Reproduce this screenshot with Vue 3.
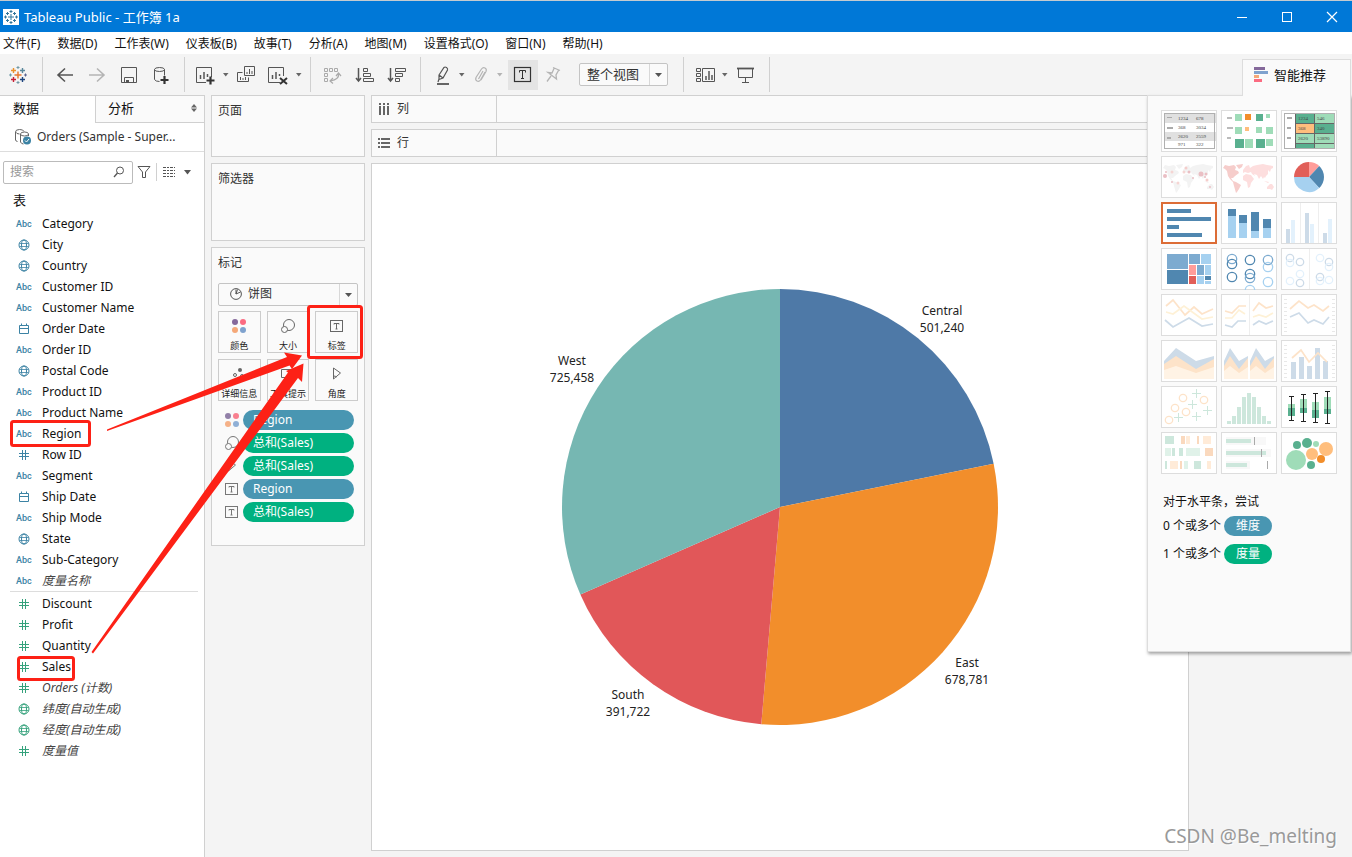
<script setup>
import { ref } from 'vue'

const menus = ['文件(F)', '数据(D)', '工作表(W)', '仪表板(B)', '故事(T)', '分析(A)', '地图(M)', '设置格式(O)', '窗口(N)', '帮助(H)']

const dimensions = [
  { type: 'abc', name: 'Category' },
  { type: 'geo', name: 'City' },
  { type: 'geo', name: 'Country' },
  { type: 'abc', name: 'Customer ID' },
  { type: 'abc', name: 'Customer Name' },
  { type: 'date', name: 'Order Date' },
  { type: 'abc', name: 'Order ID' },
  { type: 'geo', name: 'Postal Code' },
  { type: 'abc', name: 'Product ID' },
  { type: 'abc', name: 'Product Name' },
  { type: 'abc', name: 'Region' },
  { type: 'num', name: 'Row ID' },
  { type: 'abc', name: 'Segment' },
  { type: 'date', name: 'Ship Date' },
  { type: 'abc', name: 'Ship Mode' },
  { type: 'geo', name: 'State' },
  { type: 'abc', name: 'Sub-Category' },
  { type: 'abc', name: '度量名称', auto: true },
]
const measures = [
  { type: 'num', name: 'Discount' },
  { type: 'num', name: 'Profit' },
  { type: 'num', name: 'Quantity' },
  { type: 'num', name: 'Sales' },
  { type: 'num', name: 'Orders (计数)', auto: true },
  { type: 'geo', name: '纬度(自动生成)', auto: true },
  { type: 'geo', name: '经度(自动生成)', auto: true },
  { type: 'num', name: '度量值', auto: true },
]
const fieldGroups = [
  { key: 'dimension', fields: dimensions },
  { key: 'measure', fields: measures },
]

const markButtons = [
  { icon: 'color', label: '颜色' },
  { icon: 'size', label: '大小' },
  { icon: 'label', label: '标签' },
  { icon: 'detail', label: '详细信息' },
  { icon: 'tooltip', label: '工具提示' },
  { icon: 'angle', label: '角度' },
]
const pills = [
  { icon: 'color', label: 'Region', kind: 'blue' },
  { icon: 'size', label: '总和(Sales)', kind: 'green' },
  { icon: 'angle', label: '总和(Sales)', kind: 'green' },
  { icon: 'label', label: 'Region', kind: 'blue' },
  { icon: 'label', label: '总和(Sales)', kind: 'green' },
]

const slice = (cx, cy, r, from, to) => {
  const p = (t) => `${(cx + r * Math.sin(t * 2 * Math.PI)).toFixed(2)} ${(cy - r * Math.cos(t * 2 * Math.PI)).toFixed(2)}`
  return `M${cx} ${cy}L${p(from)}A${r} ${r} 0 ${to - from > 0.5 ? 1 : 0} 1 ${p(to)}Z`
}

const regions = [
  { name: 'Central', value: 501240, color: '#4e79a7', x: 162, y: -192 },
  { name: 'East', value: 678781, color: '#f28e2b', x: 187, y: 160 },
  { name: 'South', value: 391722, color: '#e15759', x: -152, y: 192 },
  { name: 'West', value: 725458, color: '#76b7b2', x: -208, y: -142 },
]
const total = regions.reduce((s, r) => s + r.value, 0)
let acc = 0
const slices = regions.map((r) => {
  const from = acc / total
  acc += r.value
  return { ...r, d: slice(0, 0, 218, from, acc / total), text: r.value.toLocaleString('en-US') }
})

const miniPie = [
  { d: slice(28, 21, 15, 0, 0.12), c: '#ff9d9a' },
  { d: slice(28, 21, 15, 0.12, 0.38), c: '#5087b0' },
  { d: slice(28, 21, 15, 0.38, 0.75), c: '#a6d1f0' },
  { d: slice(28, 21, 15, 0.75, 1), c: '#e15f59' },
]

const G = '#59b08f', L = '#9fdcb8', O = '#ffbe7d', D = '#5087b0', M = '#7dabd0', B = '#a6d1f0'
const PB = '#cddbe8', LB = '#e3f1fc', PO = '#fde3c9', PY = '#fef1d6', PG = '#cde7dc'

const worldAmericas = 'M2 12L4 9L8 10L13 9L15 11L14 14L17 15L18 17L14 20L12 22L10 22L12 25L15 26L20 29L18 33L16 36L15 37L13 30L12 26L9 23L7 20L6 15L4 13ZM15 9L22 8L21 11L18 13Z'
const worldOthers = 'M22 14L25 10L28 9L29 12L32 10L36 9L42 8L46 9L52 10L52 12L50 13L49 16L47 14L47 18L45 20L44 22L43 21L42 23L40 20L38 23L36 19L33 18L34 20L31 18L30 16L27 17L24 16L22 17ZM22 20L25 18L30 19L33 23L30 27L29 31L27 32L26 26L22 24ZM46 31L49 28L51 28L53 31L51 34L49 33L46 33ZM43 25L48 26L47 27Z'

const thumbs = [
  { name: '文本表', rects: [[3, 3, 52, 10, '#e0e0e0'], [3, 22, 52, 9, '#e0e0e0'], [6, 7, 5, 1, '#aaa'], [6, 17, 6, 2, '#aaa'], [6, 27, 4, 2, '#aaa']], frame: true, texts: [[17, 10, '1234'], [35, 10, '678'], [17, 19, '368'], [35, 19, '3034'], [17, 28, '2620'], [35, 28, '2559'], [17, 36, '971'], [35, 36, '322']] },
  { name: '热图', rects: [[6, 7, 5, 2, '#bbb'], [6, 17, 6, 2, '#bbb'], [6, 27, 4, 2, '#bbb'], [14, 4, 7, 7, L], [24, 4, 6, 6, '#f28e2b'], [35, 4, 7, 7, G], [45, 4, 4, 4, L], [14, 17, 7, 7, L], [24, 17, 4, 4, O], [35, 17, 6, 6, L], [45, 17, 7, 7, L], [14, 29, 9, 9, G], [24, 29, 8, 9, L], [35, 29, 9, 9, G], [45, 29, 7, 7, L]] },
  { name: '突出显示表', frame: true, rects: [[6, 7, 5, 2, '#aaa'], [6, 17, 4, 2, '#aaa'], [6, 27, 4, 2, '#aaa'], [14, 4, 39, 34, '#666'], [15, 4, 18, 9, G], [34, 4, 19, 9, L], [15, 14, 18, 9, O], [34, 14, 19, 9, G], [15, 24, 18, 9, L], [34, 24, 19, 9, L], [15, 34, 18, 4, G], [34, 34, 19, 4, L]], texts: [[17, 10, '1234'], [36, 10, '546'], [17, 20, '368'], [36, 20, '340'], [17, 30, '2620'], [36, 30, '53890']] },
  { name: '符号地图', areas: [[worldAmericas, '#f3f3f3'], [worldOthers, '#f3f3f3']], dots: [[4, 20, 2, '#eabfc4'], [5, 16, 1, '#eabfc4'], [11, 16, 1.5, '#f5d5d3'], [17, 27, 1.5, '#f5d5d3'], [11, 26, 1, '#eabfc4'], [25, 12, 1.5, '#f5cdcb'], [23, 16, 1.5, '#f5d5d3'], [28, 16, 1.5, '#eabfc4'], [32, 22, 1, '#eabfc4'], [40, 18, 2.5, '#eabfc4'], [45, 18, 1.5, '#eabfc4'], [44, 21, 1, '#eabfc4'], [46, 24, 1.5, '#f5cdcb'], [49, 31, 1, '#eabfc4']] },
  { name: '地图', areas: [[worldAmericas, '#f6cdcb'], [worldOthers, '#fddede']] },
  { name: '饼图', areas: miniPie.map((p) => [p.d, p.c]) },
  { name: '水平条', selected: true, rects: [[6, 7, 24, 4, D], [6, 15, 44, 4, D], [6, 23, 12, 4, D], [6, 31, 35, 4, D]] },
  { name: '堆叠条', rects: [[7, 7, 8, 7, D], [7, 14, 8, 22, B], [18, 13, 8, 8, D], [18, 21, 8, 15, B], [30, 10, 8, 19, D], [30, 29, 8, 7, B], [42, 17, 8, 9, D], [42, 26, 8, 10, B]] },
  { name: '并排条', rects: [[19, 1, 1, 40, '#eee'], [37, 1, 1, 40, '#eee'], [5, 27, 4, 14, PB], [10, 18, 4, 23, LB], [24, 11, 4, 30, PB], [29, 22, 4, 19, LB], [42, 31, 4, 10, PB], [47, 17, 4, 24, LB]] },
  { name: '树状图', rects: [[6, 6, 21, 15, M], [6, 22, 21, 14, D], [28, 6, 11, 10, M], [40, 6, 10, 10, B], [28, 17, 7, 10, '#ff9d9a'], [28, 28, 7, 8, '#e15f59'], [36, 17, 7, 10, M], [44, 17, 6, 10, B], [36, 28, 7, 8, B], [44, 28, 6, 4, D], [44, 33, 6, 3, B]] },
  { name: '圆视图', rings: [[11, 11, 4.7, M], [11, 16, 4.7, D], [11, 29, 4.7, D], [29, 12, 4.7, D], [29, 26, 4.7, D], [29, 30, 4.7, M], [29, 42, 4.7, B], [47, 19, 4.7, B], [47, 12, 4.7, M], [47, 34, 4.7, B]] },
  { name: '并排圆', rects: [[28, 1, 1, 40, '#eee']], rings: [[9, 10, 3.7, PB], [9, 15, 3.7, LB], [19, 14, 3.7, PB], [19, 26, 3.7, LB], [9, 33, 3.7, LB], [19, 35, 3.7, PB], [39, 10, 3.7, LB], [48, 14, 3.7, PB], [48, 19, 3.7, LB], [39, 29, 3.7, PB], [39, 33, 3.7, LB], [48, 32, 3.7, LB]] },
  { name: '线(连续)', lines: [['5,12 12,6 24,21 33,13 41,20 52,15', PO], ['5,18 12,20 23,12 41,25 52,23', PY], ['4,26 12,33 28,24 41,32 52,30', PB]] },
  { name: '线(离散)', rects: [[28, 1, 1, 40, '#eee']], lines: [['4,17 11,19 18,12 25,12', PO], ['4,24 11,24 18,16 24,20', PY], ['4,31 11,33 17,27 25,27', PB], ['32,17 38,9 45,14 52,12', PO], ['32,23 38,21 45,23 52,19', PY], ['32,31 38,27 45,30 52,27', PB]] },
  { name: '双线', ticks: true, lines: [['9,15 18,7 27,14 33,11 42,17 48,12', PO], ['9,23 18,19 27,29 33,26 42,30 48,23', PB]] },
  { name: '区域(连续)', areas: [['M3 21L15 8L35 21L53 16V39H3Z', PB], ['M3 24L15 16L35 29L53 19V39H3Z', PO], ['M3 30L15 26L35 33L53 27V39H3Z', '#fff3e5']] },
  { name: '区域(离散)', areas: [['M3 21L9 8L18 21L27 16V39H3ZM29 21L35 8L44 21L53 16V39H29Z', PB], ['M3 26L9 16L18 29L27 18V39H3ZM29 26L35 16L44 29L53 18V39H29Z', PO], ['M3 31L9 26L18 33L27 27V39H3ZM29 31L35 26L44 33L53 27V39H29Z', '#fff3e5']] },
  { name: '双组合', ticks: true, rects: [[10, 22, 5, 17, PB], [18, 17, 5, 22, PB], [26, 26, 5, 13, PB], [34, 8, 5, 31, PB], [42, 21, 5, 18, PB]], lines: [['11,18 20,10 28,22 37,13 46,22', PO]] },
  { name: '散点图', rings: [[22, 12, 3.7, PO], [43, 14, 3.7, PO], [14, 22, 3.7, PO], [25, 26, 3.7, PO], [8, 34, 3.7, PO]], pluses: [[35, 7], [31, 18], [46, 24], [17, 31], [35, 30]] },
  { name: '直方图', rects: [35, 30, 21, 11, 7, 11, 21, 30, 35].map((y, i) => [6 + i * 5, y, 4, 38 - y, PG]) },
  { name: '盒须图', rects: [[7, 18, 7, 4, L], [7, 22, 7, 8, G], [19, 13, 7, 9, L], [19, 22, 7, 5, G], [31, 16, 7, 8, L], [31, 24, 7, 8, G], [43, 11, 7, 12, L], [43, 23, 7, 5, G], ...[[8, 10, 34], [20, 8, 35], [32, 7, 36], [44, 5, 37]].flatMap(([x, a, b]) => [[x, a, 5, 1, '#222'], [x, b, 5, 1, '#222'], [x + 2, a, 1, b - a, '#222']])] },
  { name: '甘特图', rects: [[4, 4, 9, 8, PG], [20, 4, 4, 8, '#fad9be'], [25, 4, 4, 8, '#ffebd8'], [36, 4, 2, 8, '#fad9be'], [42, 4, 8, 8, '#ffebd8'], [4, 16, 6, 8, '#e0f2e9'], [11, 16, 3, 8, PG], [18, 16, 4, 8, PG], [25, 16, 14, 8, '#e0f2e9'], [44, 16, 8, 8, '#fad9be'], [4, 29, 2, 8, PG], [9, 29, 8, 8, '#ffebd8'], [19, 29, 2, 8, '#fad9be'], [23, 29, 4, 8, '#e0f2e9'], [33, 29, 7, 8, PG], [46, 29, 4, 8, '#ffebd8']] },
  { name: '标靶图', rects: [[5, 5, 40, 8, '#f8f8f8'], [5, 7, 25, 4, PG], [33, 5, 1, 8, '#aaa'], [5, 17, 45, 8, '#f8f8f8'], [5, 19, 40, 4, PG], [40, 17, 1, 8, '#aaa'], [5, 29, 24, 8, '#f8f8f8'], [5, 31, 21, 4, PG], [46, 29, 1, 8, '#aaa']] },
  { name: '填充气泡图', dots: [[16, 13, 4, G], [26, 11, 5, G], [35, 12, 3, L], [45, 17, 7, O], [31, 22, 6, O], [40, 27, 4, '#f28e2b'], [15, 28, 10, L], [30, 33, 4, G]] },
]

const viewFit = ref('整个视图')
const markType = ref('饼图')
const search = ref('')
</script>

<template>
  <div class="app">
    <header class="titlebar">
      <svg class="applogo" width="16" height="16" viewBox="0 0 16 16">
        <rect width="16" height="16" fill="#fff" />
        <path d="M8 5v6M5 8h6M8 1v3M6.5 2.5h3M8 12v3M6.5 13.500h3M2.500 6.500v3M1 8h3M13.500 6.500v3M12 8h3M4.500 3v3M3 4.500h3M11.500 3v3M10 4.500h3M4.500 10v3M3 11.500h3M11.500 10v3M10 11.500h3" stroke="#33769b" fill="none" />
      </svg>
      <h1>Tableau Public - 工作簿 1a</h1>
      <div class="winbtns">
        <button aria-label="最小化"><svg width="12" height="12"><path d="M1 6.500h10" stroke="#fff" /></svg></button>
        <button aria-label="最大化"><svg width="12" height="12"><rect x="1.500" y="1.500" width="9" height="9" fill="none" stroke="#fff" /></svg></button>
        <button aria-label="关闭"><svg width="12" height="12"><path d="M1 1l10 10M11 1L1 11" stroke="#fff" stroke-width="1.200" /></svg></button>
      </div>
    </header>

    <nav class="menubar">
      <button v-for="m in menus" :key="m">{{ m }}</button>
    </nav>

    <div class="toolbar">
      <div class="group g1">
        <button class="tool" aria-label="开始页面">
          <svg width="24" height="24" fill="none" stroke-width="1.400">
            <path d="M12 8.500v7M8.500 12h7" stroke="#e8762c" />
            <path d="M7.500 5v5M5 7.500h5" stroke="#eb912c" />
            <path d="M16.500 5v5M14 7.500h5" stroke="#59879b" />
            <path d="M7.500 14v5M5 16.500h5" stroke="#c72035" />
            <path d="M16.500 14v5M14 16.500h5" stroke="#1f457e" />
            <path d="M12 3v3M10.500 4.500h3M12 18v3M10.500 19.500h3" stroke="#7199a6" stroke-width="1" />
            <path d="M4.500 10.500v3M3 12h3" stroke="#7199a6" stroke-width="1" />
            <path d="M19.500 10.500v3M18 12h3" stroke="#5b6591" stroke-width="1" />
          </svg>
        </button>
      </div>
      <div class="group g2">
        <button class="tool" aria-label="后退"><svg width="24" height="24"><path d="M20 12H5M12 5.500L5 12l7 6.500" fill="none" stroke="#555" stroke-width="1.600" /></svg></button>
        <button class="tool" aria-label="前进"><svg width="24" height="24"><path d="M4 12h15M12 5.500l7 6.500-7 6.500" fill="none" stroke="#b4b4b4" stroke-width="1.600" /></svg></button>
        <button class="tool" aria-label="保存"><svg width="24" height="24"><path d="M4.500 4.500h15v15h-15zM7.500 19.500v-5h9v5" fill="none" stroke="#555" /><path d="M9 17h3v3H9z" fill="#555" /></svg></button>
        <button class="tool" aria-label="新建数据源"><svg width="24" height="24"><g fill="none" stroke="#555"><ellipse cx="10.500" cy="6.500" rx="5" ry="2" /><path d="M5.500 6.500v10q1 2 5 2M15.500 6.500v6" /></g><path d="M15.500 13v8M11.500 17h8" stroke="#333" stroke-width="2.200" /></svg></button>
      </div>
      <div class="group g3">
        <button class="tool" aria-label="新建工作表"><svg width="24" height="24"><path d="M13 19.500H3.500v-15h15V14" fill="none" stroke="#555" /><path d="M7.500 16v-4M11 16V9M14.500 14v-3" stroke="#555" stroke-width="1.500" /><path d="M17.500 13.500v8M13.500 17.500h8" stroke="#333" stroke-width="2.200" /></svg></button>
        <button class="caret" aria-label="更多工作表"><svg width="6" height="4"><path d="M0 0h5.500L2.750 3.500z" fill="#666" /></svg></button>
        <button class="tool" aria-label="复制"><svg width="24" height="24"><path d="M10.500 3.500h10v9h-10zM8.500 9.500h-5v9h11v-4" fill="none" stroke="#555" /><path d="M13 11V9M15.500 11V6M18 11V8M6.500 17v-3M9 17v-2M11.500 17v-3" stroke="#555" /></svg></button>
        <button class="tool" aria-label="清除工作表"><svg width="24" height="24"><path d="M14 19.500H2.500v-15h15V13" fill="none" stroke="#555" /><path d="M6.500 16v-4M10 16V9M13.500 13v-2" stroke="#555" stroke-width="1.500" /><path d="M14 15l7 6M21 15l-7 6" stroke="#333" stroke-width="2" /></svg></button>
        <button class="caret" aria-label="更多清除"><svg width="6" height="4"><path d="M0 0h5.500L2.750 3.500z" fill="#666" /></svg></button>
      </div>
      <div class="group g4">
        <button class="tool" aria-label="交换"><svg width="24" height="24"><g fill="none" stroke="#aaa"><path d="M3.500 5.500h3v3h-3zM8.500 5.500h3v3h-3zM13.500 5.500h3v3h-3zM3.500 10.500h3v3h-3zM3.500 15.500h3v3h-3z" /><path d="M17.500 10.500q1 6-8 7.500M15 13l2.500-3 2.500 3M12 15l-3 3 3 2.500" stroke-width="1.200" /></g></svg></button>
        <button class="tool" aria-label="升序"><svg width="24" height="24" fill="none" stroke="#555"><path d="M5.500 5v13M3 15l2.500 3 2.500-3" stroke-width="1.500" /><path d="M10.500 5.500h4v3h-4zM10.500 10.500h7v3h-7zM10.500 15.500h10v3h-10z" /></svg></button>
        <button class="tool" aria-label="降序"><svg width="24" height="24" fill="none" stroke="#555"><path d="M5.500 5v13M3 15l2.500 3 2.500-3" stroke-width="1.500" /><path d="M10.500 5.500h10v3h-10zM10.500 10.500h7v3h-7zM10.500 15.500h4v3h-4z" /></svg></button>
      </div>
      <div class="group g5">
        <button class="tool narrow" aria-label="突出显示"><svg width="24" height="24" fill="none" stroke="#555"><path d="M6 21h12" stroke-width="1.800" /><path d="M8 12l5-7.500q1-1 2.500 0t1 2.500L12 15l-4 1.500zM8 12l4 3M8 16l-1 3" stroke-width="1.200" /></svg></button>
        <button class="caret" aria-label="突出显示选项"><svg width="6" height="4"><path d="M0 0h5.500L2.750 3.500z" fill="#666" /></svg></button>
        <button class="tool narrow" aria-label="组成员"><svg width="24" height="24"><path d="M16 9l-4.500 8q-1.500 2-3.500 1t-1-3.500L12.500 6q1.500-2 3.500-1t1 3.500L12 17M14 8l-4.500 8" fill="none" stroke="#b4b4b4" stroke-width="1.200" /></svg></button>
        <button class="caret" aria-label="组选项"><svg width="6" height="4"><path d="M0 0h5.500L2.750 3.500z" fill="#b4b4b4" /></svg></button>
        <button class="tool marklabel" aria-label="显示标记标签"><svg width="24" height="24" fill="none" stroke="#333"><rect x="3.500" y="4.500" width="16" height="14" stroke-width="1.200" /><path d="M8.500 9.500v-2h6v2M11.500 7.500v8M10 15.500h3" /></svg></button>
        <button class="tool pin" aria-label="固定"><svg width="24" height="24"><path d="M11 4.500l7 3M12 5.500l-2 4.500-4-.5 8.500 6.500-.500-4 2.500-4.500M9 13l-4 5.500" fill="none" stroke="#b4b4b4" stroke-width="1.300" /></svg></button>
        <div class="select fit">
          <select v-model="viewFit" aria-label="适合"><option>整个视图</option></select>
          <span class="drop"><svg width="7" height="4"><path d="M0 0h7L3.500 4z" fill="#555" /></svg></span>
        </div>
      </div>
      <div class="group g6">
        <button class="tool narrow" aria-label="显示/隐藏卡"><svg width="24" height="24" fill="none" stroke="#555"><path d="M8.500 5.500h12v13h-12zM2.500 5.500h4v3h-4zM2.500 10.500h4v3h-4zM2.500 15.500h4v3h-4z" /><path d="M12 17v-4M15 17V8M18 17v-5" stroke-width="1.500" /></svg></button>
        <button class="caret" aria-label="卡选项"><svg width="6" height="4"><path d="M0 0h5.500L2.750 3.500z" fill="#666" /></svg></button>
        <button class="tool" aria-label="演示模式"><svg width="24" height="24" fill="none" stroke="#555"><path d="M3 5.500h17" stroke-width="1.800" /><path d="M4.500 5.500v9h14v-9M11.500 14.500v5M8 19.500h7" /></svg></button>
      </div>
    </div>

    <main class="body">
      <aside class="sidebar">
        <div class="tabs">
          <button class="tab active">数据</button>
          <button class="tab other">分析<svg width="6" height="8"><path d="M0 3.500L3 0l3 3.500zM0 4.500h6L3 8z" fill="#666" /></svg></button>
        </div>
        <button class="source">
          <svg width="18" height="18" fill="none" stroke="#666">
            <path d="M1.500 4v8q0 1 2 1.500M1.500 4q0-2.500 4-2.500t4.500 2M1.500 4q1 2 4 2" />
            <path d="M6.500 6q0-2 4-2t4 2-4 2-4-2zM6.500 6v8q1 2 3 2M14.500 6v2" />
            <circle cx="13" cy="12.500" r="4" fill="#3c83a4" stroke="none" /><path d="M11 12.500l1.500 1.500 2.500-3" stroke="#fff" />
          </svg>
          <span>Orders (Sample - Super...</span>
        </button>
        <div class="finder">
          <div class="search">
            <input v-model="search" type="text" placeholder="搜索" aria-label="搜索" />
            <svg width="12" height="12" fill="none" stroke="#555"><circle cx="7" cy="4.500" r="3.500" /><path d="M4.500 7L1 11" stroke-width="1.300" /></svg>
          </div>
          <button class="funnel" aria-label="筛选"><svg width="14" height="14"><path d="M1 1.500h12L8.500 7v5.500h-3V7z" fill="none" stroke="#555" /></svg></button>
          <button class="viewas" aria-label="查看方式"><svg width="13" height="10"><path d="M0 .5h12M0 3.500h12M0 6.500h12M0 9.500h12" stroke="#555" stroke-dasharray="3 1 2 1" /></svg></button>
          <button class="viewmore" aria-label="更多"><svg width="7" height="5"><path d="M0 0h7L3.500 4.500z" fill="#555" /></svg></button>
        </div>
        <h2>表</h2>
        <ul v-for="g in fieldGroups" :key="g.key" class="fields" :class="g.key">
          <li v-for="f in g.fields" :key="f.name">
            <button>
              <span v-if="f.type === 'abc'" class="abc">Abc</span>
              <svg v-else class="ficon" width="12" height="12" fill="none" stroke="currentColor">
                <template v-if="f.type === 'geo'"><circle cx="6" cy="6" r="5" /><ellipse cx="6" cy="6" rx="2.500" ry="5" /><path d="M1.500 4.500h9M1.500 7.500h9" stroke-width=".8" /></template>
                <path v-else-if="f.type === 'date'" d="M1.500 2.500h9v8h-9zM1.500 5.500h9M3.500 0.500v2M8.500 0.500v2" />
                <path v-else d="M4.500 1v10M7.500 1v10M1 4.500h10M1 7.500h10" />
              </svg>
              <span :class="{ auto: f.auto }">{{ f.name }}</span>
            </button>
          </li>
        </ul>
      </aside>

      <div class="cards">
        <section class="card pages"><h2>页面</h2></section>
        <section class="card filters"><h2>筛选器</h2></section>
        <section class="card marks">
          <h2>标记</h2>
          <div class="select marktype">
            <svg class="lead" width="12" height="12" fill="none" stroke="#555"><circle cx="6" cy="6" r="5.400" /><path d="M6 6V1.500M6 6l4.500-2M6 6l1.500-4.500" /></svg>
            <select v-model="markType" aria-label="标记类型"><option>饼图</option></select>
            <span class="drop"><svg width="7" height="4"><path d="M0 0h7L3.500 4z" fill="#555" /></svg></span>
          </div>
          <div class="markgrid">
            <button v-for="b in markButtons" :key="b.label">
              <svg width="16" height="16" fill="none" stroke="#666">
                <g v-if="b.icon === 'color'" stroke="none"><circle cx="4" cy="4" r="3" fill="#85699b" /><circle cx="12" cy="4" r="3" fill="#fb6b81" /><circle cx="4" cy="12" r="3" fill="#f5a878" /><circle cx="12" cy="12" r="3" fill="#7fa2ce" /></g>
                <g v-else-if="b.icon === 'size'"><circle cx="9" cy="7" r="5.500" /><circle cx="4.500" cy="11.500" r="3" fill="#fafafa" /></g>
                <g v-else-if="b.icon === 'label'"><rect x="1.500" y="2.500" width="12" height="11" /><path d="M5 6.500v-1h5v1M7.500 5.500v5.500M6.500 11h2" /></g>
                <g v-else-if="b.icon === 'detail'"><circle cx="9" cy="4" r="2" fill="#666" stroke="none" /><circle cx="4" cy="9" r="1.500" /><circle cx="11" cy="10" r="1.500" /></g>
                <path v-else-if="b.icon === 'tooltip'" d="M1.500 3.500h12v8H8l-2 2v-2H1.500z" />
                <path v-else d="M4.500 2l7 5-7 6zM4.500 10q2 0 3 1" />
              </svg>
              <span>{{ b.label }}</span>
            </button>
          </div>
          <ul class="pills">
            <li v-for="(p, i) in pills" :key="i">
              <svg width="16" height="16" fill="none" stroke="#777">
                <g v-if="p.icon === 'color'" stroke="none"><circle cx="4" cy="4" r="3" fill="#9280a8" /><circle cx="12" cy="4" r="3" fill="#f9808f" /><circle cx="4" cy="12" r="3" fill="#f5b188" /><circle cx="12" cy="12" r="3" fill="#90b0d6" /></g>
                <g v-else-if="p.icon === 'size'"><circle cx="9" cy="7" r="5.500" /><circle cx="4.500" cy="11.500" r="3" fill="#fafafa" /></g>
                <g v-else-if="p.icon === 'label'"><rect x="1.500" y="2.500" width="12" height="11" /><path d="M5 6.500v-1h5v1M7.500 5.500v5.500M6.500 11h2" /></g>
                <path v-else d="M4.500 2l7 5-7 6z" />
              </svg>
              <button class="pill" :class="p.kind">{{ p.label }}</button>
            </li>
          </ul>
        </section>
      </div>

      <div class="work">
        <div class="shelf">
          <div class="shelfname"><svg width="12" height="12"><path d="M2 0v2M6 0v2M10 0v2M2 3v9M6 3v9M10 3v9" stroke="#666" stroke-width="2" /></svg>列</div>
        </div>
        <div class="shelf">
          <div class="shelfname"><svg width="12" height="12"><path d="M0 2h2M0 6h2M0 10h2M3 2h9M3 6h9M3 10h9" stroke="#666" stroke-width="2" /></svg>行</div>
        </div>
        <div class="view">
          <svg viewBox="-408 -343 816 686" role="img" aria-label="按 Region 划分的 Sales">
            <path v-for="s in slices" :key="s.name" :d="s.d" :fill="s.color" />
            <g v-for="s in slices" :key="s.text" class="slicelabel">
              <text :x="s.x" :y="s.y">{{ s.name }}</text>
              <text :x="s.x" :y="s.y + 17">{{ s.text }}</text>
            </g>
          </svg>
        </div>
      </div>
    </main>

    <aside class="showme">
      <button class="showtab">
        <svg width="14" height="16"><path d="M0 0h11v3H0z" fill="#85699b" /><path d="M0 4h14v3H0z" fill="#7fa2ce" /><path d="M0 8h5v3H0z" fill="#f5a878" /><path d="M0 12h8v3H0z" fill="#fb6b81" /></svg>
        智能推荐
      </button>
      <div class="showpanel">
        <div class="thumbs">
          <button v-for="t in thumbs" :key="t.name" :aria-label="t.name" :class="{ selected: t.selected }">
            <svg viewBox="0 0 56 42">
              <rect v-for="(r, i) in t.rects" :key="'r' + i" :x="r[0]" :y="r[1]" :width="r[2]" :height="r[3]" :fill="r[4]" />
              <path v-for="(a, i) in t.areas" :key="'a' + i" :d="a[0]" :fill="a[1]" />
              <g v-if="t.ticks" stroke="#e8e8e8" stroke-dasharray="1 3" stroke-width="3"><path d="M4.500 5v33M52.500 5v33" /></g>
              <polyline v-for="(l, i) in t.lines" :key="'l' + i" :points="l[0]" :stroke="l[1]" fill="none" stroke-width="1.700" />
              <circle v-for="(c, i) in t.dots" :key="'d' + i" :cx="c[0]" :cy="c[1]" :r="c[2]" :fill="c[3]" />
              <circle v-for="(c, i) in t.rings" :key="'c' + i" :cx="c[0]" :cy="c[1]" :r="c[2]" :stroke="c[3]" fill="none" stroke-width="1.300" />
              <path v-for="(p, i) in t.pluses" :key="'p' + i" :d="`M${p[0] - 4} ${p[1] + 0.5}h9M${p[0] + 0.5} ${p[1] - 4}v9`" stroke="#cde7dc" />
              <rect v-if="t.frame" x="3.500" y="3.500" width="50" height="35" fill="none" stroke="#b0b0b0" />
              <text v-for="(x, i) in t.texts" :key="'t' + i" :x="x[0]" :y="x[1]" class="tiny">{{ x[2] }}</text>
            </svg>
          </button>
        </div>
        <div class="hint">
          <p>对于水平条，尝试</p>
          <p>0 个或多个 <span class="tag blue">维度</span></p>
          <p>1 个或多个 <span class="tag green">度量</span></p>
        </div>
      </div>
    </aside>

    <svg class="annotations" width="400" height="700" aria-hidden="true">
      <g fill="none" stroke="#fd2116" stroke-width="3">
        <rect x="11.500" y="421.500" width="78" height="24" rx="2" />
        <rect x="18.500" y="657.500" width="55" height="22" rx="2" />
        <rect x="308.500" y="306.500" width="53" height="51" rx="2" />
      </g>
      <path d="M107 429.500L287 357L284 352.500L302 355.500L292 369L289.500 365.500L107 431Z" fill="#fd2116" />
      <path d="M91.500 652L288 372.500L286 371L303.500 363.500L302 382L298 378L93 653.500Z" fill="#fd2116" />
    </svg>
    <div class="watermark">CSDN @Be_melting</div>
  </div>
</template>

<style>
body {
  background: #f4f4f4;
}
</style>

<style scoped>
* {
  box-sizing: border-box;
}
.app {
  position: relative;
  display: flex;
  flex-direction: column;
  min-height: 100vh;
  font: 12px/16px "Noto Sans", "Noto Sans CJK SC", sans-serif;
  color: #111;
  background: #f4f4f4;
  overflow: hidden;
}
button {
  font: inherit;
  color: inherit;
  background: none;
  border: 0;
  padding: 0;
  text-align: left;
}
svg {
  display: block;
  flex: none;
}
h1, h2, p, ul {
  margin: 0;
  padding: 0;
  font: inherit;
  list-style: none;
}
.titlebar {
  display: flex;
  align-items: center;
  height: 32px;
  padding-left: 3px;
  border-top: 1px solid #c4cbd0;
  background: #0078d7;
  color: #fff;
}
.titlebar h1 {
  flex: 1;
  margin-left: 5px;
  font-size: 13px;
}
.winbtns {
  display: flex;
  margin-right: -2px;
}
.winbtns button {
  display: flex;
  align-items: center;
  justify-content: center;
  width: 45px;
  height: 31px;
}
.menubar {
  display: flex;
  gap: 17px;
  align-items: center;
  height: 22px;
  padding: 2px 0 0 3px;
  background: #fff;
  white-space: nowrap;
}
.toolbar {
  display: flex;
  align-items: center;
  height: 41px;
}
.group {
  display: flex;
  align-items: center;
  height: 35px;
  border-right: 1px solid #d0d0d0;
}
.g1 { padding: 0 8px 0 2px; }
.g2 { padding: 0 7px 0 6px; }
.g3 { padding: 0 7px 0 4px; }
.g4 { padding: 0 7px 0 6px; }
.g5 { padding: 0 15px 0 8px; }
.g6 { padding: 0 7px 0 8px; }
.tool {
  display: flex;
  align-items: center;
  justify-content: center;
  width: 32px;
  height: 30px;
}
.tool.narrow {
  width: 28px;
}
.tool.marklabel {
  width: 30px;
  margin-left: 3px;
  background: #e4e4e4;
}
.caret {
  display: flex;
  align-items: center;
  justify-content: center;
  width: 10px;
  height: 30px;
}
.g3 .caret {
  width: 9px;
}
.select {
  display: flex;
  align-items: stretch;
  border: 1px solid #c4c4c4;
  border-radius: 2px;
  background: #fafafa;
}
.select select {
  appearance: none;
  flex: 1;
  min-width: 0;
  padding: 0 0 2px;
  border: 0;
  background: none;
  font: inherit;
  color: #333;
}
.drop {
  display: flex;
  align-items: center;
  justify-content: center;
  width: 18px;
  border-left: 1px solid #d8d8d8;
}
.fit {
  width: 89px;
  height: 23px;
  margin-left: 9px;
  font-size: 13px;
}
.fit select {
  padding-left: 7px;
}
.body {
  display: flex;
  flex: 1;
  gap: 6px;
  padding-right: 163px;
}
.sidebar {
  width: 205px;
  flex: none;
  background: #fff;
  border: solid #d0d0d0;
  border-width: 1px 1px 0 0;
}
.tabs {
  display: flex;
  height: 27px;
  font-size: 13px;
}
.tab {
  flex: 1;
  padding: 0 0 3px 13px;
}
.tab.other {
  flex: none;
  display: flex;
  align-items: center;
  justify-content: space-between;
  width: 109px;
  padding: 0 7px 2px 12px;
  background: #fafafa;
  border: solid #d0d0d0;
  border-width: 0 0 1px 1px;
}
.source {
  display: flex;
  align-items: center;
  gap: 5px;
  width: 100%;
  height: 29px;
  padding-left: 14px;
  border-bottom: 1px solid #ddd;
  color: #333;
}
.finder {
  display: flex;
  align-items: center;
  height: 24px;
  margin: 8px 0 6px;
  padding-left: 3px;
}
.search {
  display: flex;
  align-items: center;
  width: 130px;
  height: 23px;
  padding-right: 7px;
  border: 1px solid #bbb;
  border-radius: 2px;
}
.search input {
  flex: 1;
  min-width: 0;
  padding: 0 0 0 6px;
  border: 0;
  outline: 0;
  background: none;
  font: inherit;
}
.search input::placeholder {
  color: #999;
}
.funnel {
  padding: 2px 5px 2px 4px;
  border-right: 1px solid #d0d0d0;
}
.viewas {
  padding: 0 8px 0 6px;
}
.sidebar h2 {
  height: 23px;
  padding: 2px 13px;
  font-size: 13px;
}
.fields {
  padding: 0 6px 0 10px;
}
.fields button {
  display: flex;
  align-items: center;
  width: 100%;
  height: 21px;
}
.fields li {
  color: #111;
}
.dimension .abc, .dimension .ficon { color: #3c83a4; }
.measure .ficon { color: #35a27c; }
.measure {
  margin: 0 6px 0 10px;
  padding: 1px 0 0;
  border-top: 1px solid #ddd;
}
.abc {
  width: 26px;
  margin-left: 6px;
  font: 500 9px/12px Roboto, sans-serif;
}
.ficon {
  margin: 0 12px 0 8px;
}
.auto {
  font-style: italic;
  color: #444;
}
.cards {
  display: flex;
  flex-direction: column;
  gap: 6px;
  width: 154px;
  flex: none;
}
.card {
  border: 1px solid #d0d0d0;
  background: #fafafa;
  padding: 7px 6px;
  color: #333;
}
.pages { height: 62px; }
.filters { height: 78px; }
.marks { min-height: 299px; }
.marktype {
  height: 23px;
  margin-top: 12px;
}
.marktype .lead {
  margin: 4px 6px 0 11px;
}
.markgrid {
  display: grid;
  grid-template-columns: repeat(3, 1fr);
  gap: 6px;
  margin-top: 5px;
}
.markgrid button {
  display: flex;
  flex-direction: column;
  align-items: center;
  justify-content: space-between;
  height: 42px;
  padding-top: 6px;
  border: 1px solid #ccc;
  font-size: 9px;
  line-height: 13px;
  color: #222;
  white-space: nowrap;
}
.pills {
  display: grid;
  gap: 3px;
  margin: 9px 4px 0 6px;
}
.pills li {
  display: flex;
  align-items: center;
  gap: 3px;
}
.pill {
  flex: 1;
  height: 20px;
  padding-left: 10px;
  border-radius: 10px;
  color: #fff;
}
.blue { background: #4996b2; }
.green { background: #00b180; }
.work {
  display: flex;
  flex-direction: column;
  gap: 6px;
  flex: 1;
  min-width: 0;
  padding-bottom: 6px;
}
.shelf {
  display: flex;
  height: 28px;
  border: 1px solid #d0d0d0;
  background: #fafafa;
}
.shelfname {
  display: flex;
  align-items: center;
  gap: 7px;
  width: 125px;
  padding-left: 6px;
  border-right: 1px solid #d0d0d0;
  color: #333;
}
.view {
  flex: 1;
  display: flex;
  background: #fff;
  border: 1px solid #d0d0d0;
}
.view svg {
  flex: 1;
  min-width: 0;
}
.slicelabel text {
  text-anchor: middle;
  font-size: 12px;
  fill: #222;
}
.showme {
  position: absolute;
  top: 59px;
  right: 1px;
  width: 204px;
}
.showtab {
  position: relative;
  z-index: 1;
  display: flex;
  align-items: center;
  gap: 6px;
  width: 109px;
  height: 37px;
  margin-left: auto;
  padding: 0 0 6px 11px;
  border: solid #ddd;
  border-width: 1px 1px 0;
  background: #fafafa;
  font-size: 13px;
}
.showpanel {
  min-height: 557px;
  margin-top: -1px;
  padding: 14px 13px;
  border: 1px solid #ddd;
  background: #fafafa;
  box-shadow: 1px 2px 3px rgba(0, 0, 0, 0.35);
}
.thumbs {
  display: grid;
  grid-template-columns: repeat(3, 56px);
  gap: 4px;
}
.thumbs button {
  height: 42px;
  box-shadow: inset 0 0 0 1px #ddd;
  background: #fff;
}
.thumbs button.selected {
  box-shadow: inset 0 0 0 2px #dc6c36;
}
.tiny {
  font: 5px "Liberation Serif", serif;
  fill: #444;
}
.hint {
  display: grid;
  gap: 8px;
  padding: 19px 2px;
}
.hint p {
  line-height: 20px;
}
.hint p:first-child {
  line-height: 18px;
  margin-bottom: -3px;
}
.tag {
  display: inline-block;
  width: 48px;
  border-radius: 10px;
  color: #fff;
  text-align: center;
}
.annotations {
  position: absolute;
  top: 0;
  left: 0;
  pointer-events: none;
}
.watermark {
  position: absolute;
  right: 15px;
  bottom: 7px;
  font-size: 19px;
  line-height: 28px;
  color: #999;
  text-shadow: 1px 1px 1px #fff;
}
</style>
